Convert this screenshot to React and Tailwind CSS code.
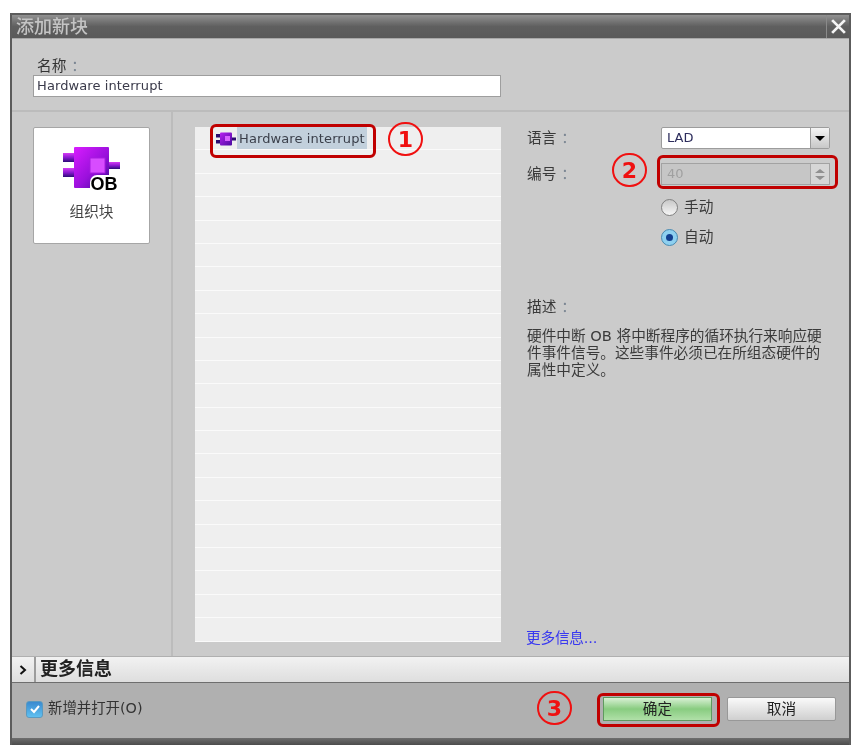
const CJK = 'font-["DejaVu_Sans","Noto_Sans_CJK_SC",sans-serif]';

function BlockIcon({ className }) {
  return (
    <svg viewBox="0 0 58 46" className={className}>
      <defs>
        <linearGradient id="blockBody" x1="0" y1="0" x2="1" y2="1">
          <stop offset="0" stopColor="#d81cff" />
          <stop offset="0.55" stopColor="#9a10dc" />
          <stop offset="1" stopColor="#3d0a96" />
        </linearGradient>
        <linearGradient id="blockPin" x1="0" y1="0" x2="0" y2="1">
          <stop offset="0" stopColor="#d63cf5" />
          <stop offset="0.5" stopColor="#8a18d0" />
          <stop offset="1" stopColor="#2c0c78" />
        </linearGradient>
      </defs>
      <rect x="0" y="6" width="12" height="9" fill="url(#blockPin)" />
      <rect x="0" y="21" width="12" height="9" fill="url(#blockPin)" />
      <rect x="45" y="15" width="12" height="7" fill="url(#blockPin)" />
      <rect x="11" y="0" width="35" height="41" rx="1" fill="url(#blockBody)" />
      <rect x="27" y="11" width="15" height="15" fill="#d84cff" stroke="#a81ae0" />
    </svg>
  );
}

function MiniBlockIcon() {
  return (
    <svg viewBox="0 0 20 14" className="w-5 h-3.5 shrink-0 mb-[3px]">
      <defs>
        <linearGradient id="miniBody" x1="0" y1="0" x2="1" y2="1">
          <stop offset="0" stopColor="#b820f0" />
          <stop offset="1" stopColor="#4a0aa0" />
        </linearGradient>
      </defs>
      <rect x="0" y="2" width="6" height="3.5" fill="#2c0c70" />
      <rect x="0" y="8" width="6" height="3.5" fill="#2c0c70" />
      <rect x="14" y="5.5" width="6" height="3" fill="#2c0c70" />
      <rect x="4" y="0.5" width="12" height="13" rx="1" fill="url(#miniBody)" />
      <rect x="9" y="4" width="5" height="5" fill="#d860ff" />
    </svg>
  );
}

function Label({ children }) {
  return (
    <>
      {children}
      <span className="ml-[5px] text-[#7a8592]">：</span>
    </>
  );
}

function Callout({ n, className }) {
  return (
    <div className={`absolute w-[35px] h-[34px] rounded-full border-[2.5px] border-[#f01010] flex items-center justify-center text-[#f01010] text-[22px] font-bold font-["DejaVu_Sans",sans-serif] ${className}`}>
      {n}
    </div>
  );
}

export default function App() {
  const rows = Array.from({ length: 22 });

  return (
    <div className="relative w-[861px] h-[748px] bg-white pl-[10px] pt-[13px] overflow-hidden blur-[0.5px]">
      <div className={`w-[841px] h-[732px] flex flex-col bg-[#cbcbcb] border-x-2 border-t-2 border-[#5c5c5c] text-[#3a3a3a] ${CJK}`}>
        {/* title bar */}
        <div className="h-[23px] shrink-0 flex items-center justify-between bg-gradient-to-b from-[#929292] via-[#5f5f5f] to-[#595959]">
          <span className="pl-1 text-[18px] leading-none font-medium text-[#c4c4c4]">添加新块</span>
          <div className="w-[23px] h-full flex items-center justify-center border-l border-[#8a8a8a]">
            <svg viewBox="0 0 16 16" className="w-[17px] h-[17px]">
              <path d="M2 2 L14 14 M14 2 L2 14" stroke="#f4f4f4" strokeWidth="2.6" />
            </svg>
          </div>
        </div>

        {/* name field */}
        <div className="h-[74px] shrink-0 border-t border-[#a8a8a8] border-b-2 border-b-[#bcbcbc] pl-[21px] pt-[18px]">
          <div className="pl-1 text-[14.67px] leading-[18px] text-[#333]"><Label>名称</Label></div>
          <div className="w-[468px] h-[22px] bg-white border border-[#9e9e9e] pl-[3px] text-[13px] tracking-[0.1px] leading-[20px] text-[#3a3a4a]">
            Hardware interrupt
          </div>
        </div>

        {/* main */}
        <div className="flex-1 flex min-h-0">
          <div className="w-[161px] shrink-0 border-r-2 border-[#bcbcbc] pl-[21px] pt-[15px]">
            <div className="w-[117px] h-[117px] bg-white border border-[#a6a6a6] rounded-[2px] flex flex-col items-center">
              <div className="relative mt-[19px] w-[58px] h-[46px]">
                <BlockIcon className="w-[58px] h-[46px]" />
                <span className="absolute left-[27px] top-[28px] bg-white rounded-tl-[7px] pl-[1px] text-[18px] leading-none font-bold text-black font-['Liberation_Sans',sans-serif]">OB</span>
              </div>
              <span className="mt-[9px] text-[14.67px] leading-[20px] text-[#444]">组织块</span>
            </div>
          </div>

          <div className="pl-[22px] pt-[15px]">
            <div className="w-[306px] bg-[#efefef] flex flex-col">
              {rows.map((_, i) => (
                <div key={i} className="h-[23.4px] shrink-0 border-b border-[#fafafa] flex items-end pl-[21px]">
                  {i === 0 && (
                    <>
                      <MiniBlockIcon />
                      <span className="ml-[1px] px-[2px] h-[22px] bg-[#c2d0dc] text-[13px] tracking-[0.1px] leading-[23px] text-[#3a3f4a]">Hardware interrupt</span>
                    </>
                  )}
                </div>
              ))}
            </div>
          </div>

          <div className="flex-1 flex flex-col pl-[26px] pt-[15px] pb-[8px] pr-[14px] min-w-0">
            <div className="flex items-center h-[22px]">
              <span className="w-[134px] text-[14.67px]"><Label>语言</Label></span>
              <div className="w-[169px] h-[22px] bg-white border border-[#9c9c9c] rounded-[2px] flex items-center justify-between">
                <span className="pl-[5px] text-[13px] text-[#2c2c5c]">LAD</span>
                <span className="w-[19px] h-full border-l border-[#9c9c9c] bg-gradient-to-b from-[#f4f4f4] to-[#c8c8c8] flex items-center justify-center">
                  <span className="border-x-[5px] border-x-transparent border-t-[5px] border-t-black" />
                </span>
              </div>
            </div>
            <div className="flex items-center h-[22px] mt-[14px]">
              <span className="w-[134px] text-[14.67px]"><Label>编号</Label></span>
              <div className="w-[169px] h-[22px] bg-[#c6c6c6] border border-[#a2a2a2] flex items-center justify-between">
                <span className="pl-[5px] text-[13px] text-[#a0a0a0]">40</span>
                <span className="w-[19px] h-full border-l border-[#a8a8a8] bg-[#d6d6d6] flex flex-col items-center justify-center gap-[3px]">
                  <span className="border-x-[5px] border-x-transparent border-b-[4px] border-b-[#909090]" />
                  <span className="border-x-[5px] border-x-transparent border-t-[4px] border-t-[#909090]" />
                </span>
              </div>
            </div>
            <div className="flex items-center h-[20px] mt-[12px] ml-[134px]">
              <span className="w-[17px] h-[17px] rounded-full border border-[#808080] bg-gradient-to-b from-[#c8c8c8] to-[#f6f6f6]" />
              <span className="ml-[6px] text-[14.67px]">手动</span>
            </div>
            <div className="flex items-center h-[20px] mt-[10px] ml-[134px]">
              <span className="w-[17px] h-[17px] rounded-full border border-[#4a8ab0] bg-[#8ed0f0] flex items-center justify-center">
                <span className="w-[7px] h-[7px] rounded-full bg-[#123f90]" />
              </span>
              <span className="ml-[6px] text-[14.67px]">自动</span>
            </div>

            <div className="mt-[50px] text-[14.67px] leading-[20px]"><Label>描述</Label></div>
            <p className="mt-[10px] w-[297px] text-[14.67px] leading-[17px]">
              硬件中断 OB 将中断程序的循环执行来响应硬件事件信号。这些事件必须已在所组态硬件的属性中定义。
            </p>
            <a className="mt-auto -ml-[1px] text-[14.67px] tracking-[-0.2px] leading-[20px] text-[#3838f0]">更多信息...</a>
          </div>
        </div>

        {/* more info bar */}
        <div className="h-[27px] shrink-0 flex bg-gradient-to-b from-[#f2f2f2] to-[#dedede] border-t border-[#b0b0b0] border-b border-b-[#6e6e6e]">
          <div className="w-[24px] border-r-2 border-[#9c9c9c] flex items-center justify-center">
            <svg viewBox="0 0 8 10" className="w-2 h-2.5">
              <path d="M1.5 1 L6 5 L1.5 9" fill="none" stroke="#111" strokeWidth="2" />
            </svg>
          </div>
          <span className="pl-[4px] text-[18px] leading-[24px] font-bold text-[#222]">更多信息</span>
        </div>

        {/* footer */}
        <div className="h-[55px] shrink-0 flex items-center bg-[#b0b0b0] pl-[14px] pr-[13px] pb-[3px]">
          <span className="w-[17px] h-[17px] rounded-[3px] border border-[#5a9ac0] bg-gradient-to-b from-[#3a8ad0] to-[#60c0f0] flex items-center justify-center">
            <svg viewBox="0 0 12 12" className="w-3 h-3">
              <path d="M2 6 L5 9 L10 3" fill="none" stroke="#fff" strokeWidth="2" />
            </svg>
          </span>
          <span className="ml-[5px] text-[14.4px] text-[#333]">新增并打开(O)</span>
          <div className="ml-auto flex gap-[15px]">
            <button className="w-[109px] h-[24px] border border-[#5f9a5f] bg-gradient-to-b from-[#d8f0d4] via-[#88cc80] to-[#b0e0a8] text-[14.67px] text-[#222]">确定</button>
            <button className="w-[109px] h-[24px] border border-[#989898] rounded-[2px] bg-gradient-to-b from-[#fafafa] to-[#cfcfcf] text-[14.67px] text-[#222]">取消</button>
          </div>
        </div>
        <div className="h-[7px] shrink-0 bg-gradient-to-b from-[#6e6e6e] to-[#4c4c4c]" />
      </div>

      {/* red annotations over the dialog */}
      <div className="absolute left-[210px] top-[124px] w-[166px] h-[34px] rounded-[6px] border-[3px] border-[#c00000]" />
      <Callout n="1" className="left-[388px] top-[122px]" />
      <div className="absolute left-[657px] top-[155px] w-[181px] h-[34px] rounded-[6px] border-[3px] border-[#c00000]" />
      <Callout n="2" className="left-[612px] top-[153px]" />
      <div className="absolute left-[597px] top-[693px] w-[123px] h-[34px] rounded-[6px] border-[3px] border-[#c00000]" />
      <Callout n="3" className="left-[537px] top-[691px]" />
    </div>
  );
}
